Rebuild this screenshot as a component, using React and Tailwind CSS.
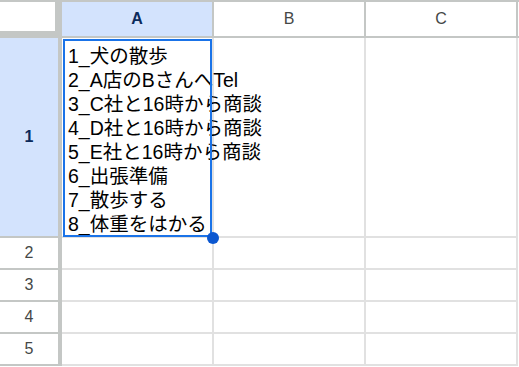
const lines = [
  "1_犬の散歩",
  "2_A店のBさんへTel",
  "3_C社と16時から商談",
  "4_D社と16時から商談",
  "5_E社と16時から商談",
  "6_出張準備",
  "7_散歩する",
  "8_体重をはかる",
];

const font = { fontFamily: '"Liberation Sans", Arial, "Noto Sans CJK JP", sans-serif' };

function ColHeader({ label, selected }) {
  return (
    <div
      className={
        "flex items-center justify-center border-t-2 border-r-2 border-b-2 border-[#c4c7c5] text-[16px] " +
        (selected ? "bg-[#d3e3fd] font-bold text-[#0b2a5b]" : "bg-white text-[#444746]")
      }
    >
      {label}
    </div>
  );
}

function RowHeader({ label, selected }) {
  return (
    <div
      className={
        "flex items-center justify-center border-r-4 border-b-2 border-[#c4c7c5] text-[16px] " +
        (selected ? "bg-[#d3e3fd] font-bold text-[#0b2a5b]" : "bg-white text-[#444746]")
      }
    >
      {label}
    </div>
  );
}

function Cell() {
  return <div className="border-r-2 border-b-2 border-[#e1e1e1] bg-white" />;
}

export default function App() {
  return (
    <div className="w-[519px] h-[367px] bg-white overflow-hidden" style={font}>
      <div className="grid grid-cols-[62px_152px_152px_152px_1fr] grid-rows-[38px_200px_32px_32px_32px_32px]">
        {/* header row */}
        <div className="border-t-2 border-r-[7px] border-b-[7px] border-[#c4c7c5] bg-white" />
        <ColHeader label="A" selected />
        <ColHeader label="B" />
        <ColHeader label="C" />
        <div className="border-t-2 border-b-2 border-[#c4c7c5]" />

        {/* row 1 */}
        <RowHeader label="1" selected />
        <div className="relative z-10 border-r-2 border-b-2 border-[#e1e1e1]">
          <div className="flex h-full flex-col justify-end pl-[6px] text-[19.5px] leading-[24px] text-black whitespace-nowrap">
            {lines.map((l) => (
              <div key={l}>{l}</div>
            ))}
          </div>
          <div className="absolute left-[1px] top-[1px] w-[149px] h-[198px] border-2 border-[#1a73e8]" />
          <div className="absolute left-[145px] top-[194px] w-[12px] h-[12px] rounded-full bg-[#0b57d0]" />
        </div>
        <div className="border-b-2 border-r-2 border-[#e1e1e1]" />
        <Cell />
        <div />

        {[2, 3, 4, 5].map((n) => (
          <div key={n} className="contents">
            <RowHeader label={n} />
            <Cell />
            <Cell />
            <Cell />
            <div />
          </div>
        ))}
      </div>
    </div>
  );
}
